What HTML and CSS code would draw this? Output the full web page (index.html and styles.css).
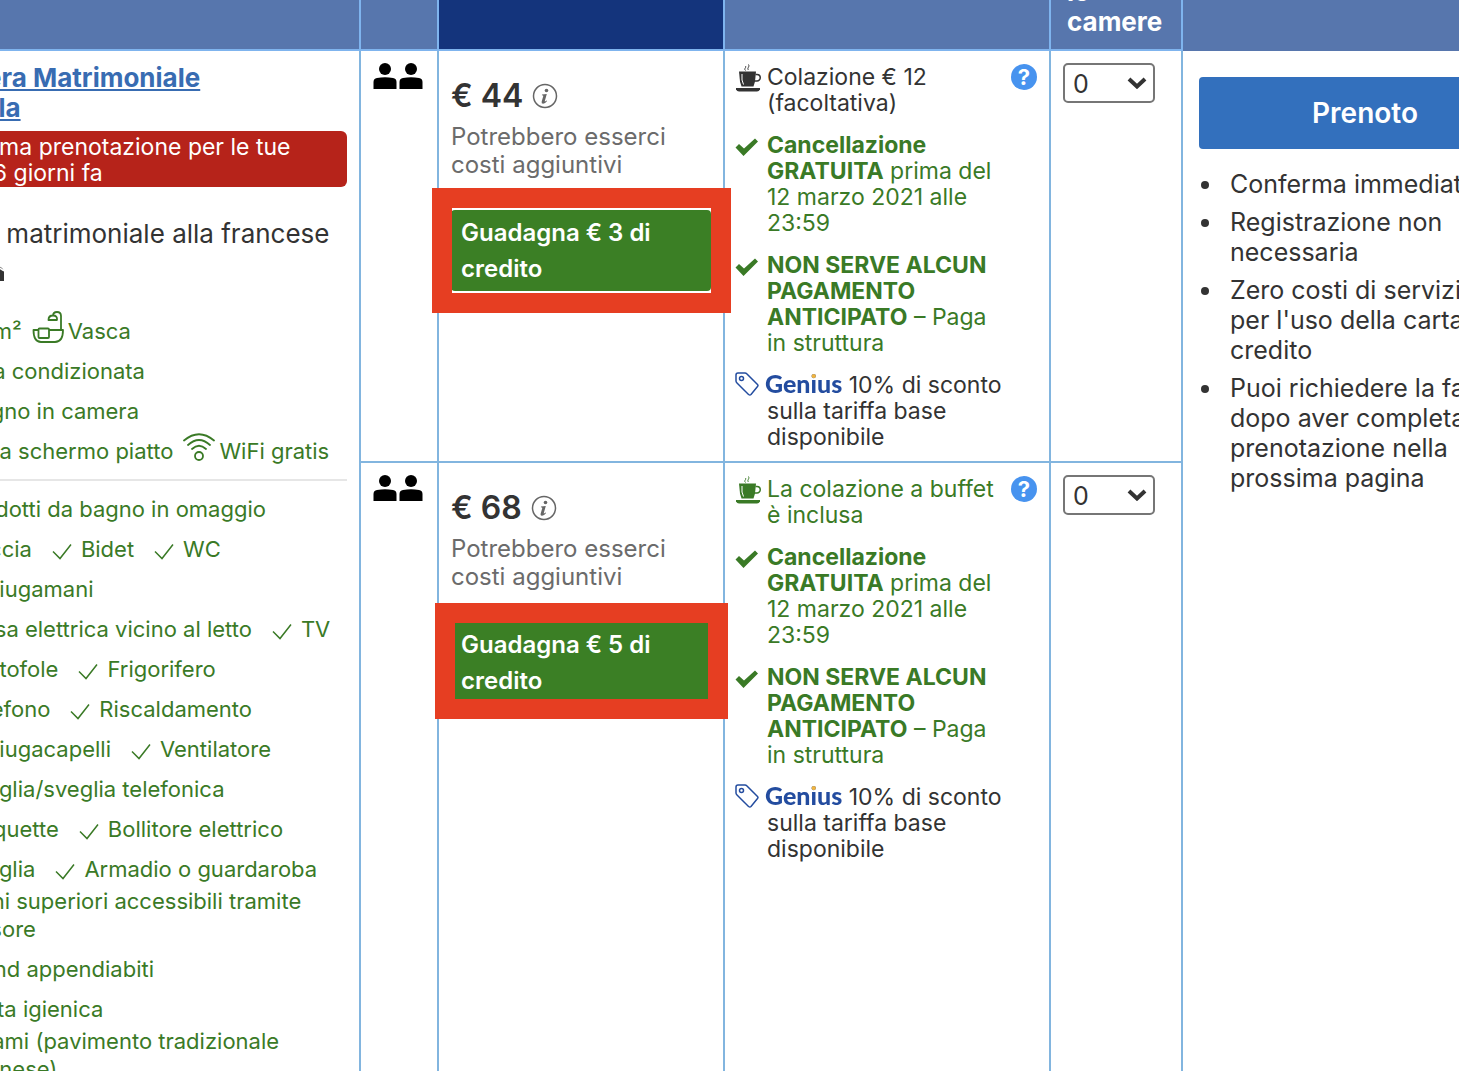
FILE: index.html
```html
<!DOCTYPE html>
<html lang="it">
<head>
  <meta charset="UTF-8" />
  <title>Camere disponibili</title>
  <link rel="stylesheet" href="styles.css">
</head>
<body>

  <!-- shared icons -->
  <svg class="sprite" aria-hidden="true">
    <symbol id="person" viewBox="0 0 24 26">
      <circle cx="12" cy="6" r="6" />
      <path d="M0.5 26v-7q0-3.5 3.5-4q8-1.300 16 0q3.500 .5 3.500 4v7z" />
    </symbol>
    <symbol id="tick" viewBox="0 0 20 17">
      <path d="M1 8.500 8 15.500 19 1.500" fill="none" stroke="currentColor" stroke-width="1.500" />
    </symbol>
    <symbol id="check" viewBox="0 0 24 20">
      <path d="M0.500 10.500 4 7 9 11.500 20 1.500 23 4.500 8.500 19z" />
    </symbol>
    <symbol id="cup" viewBox="0 0 26 28">
      <path d="M4 7.500h17l-1 10-1.500 5H6.500l-1.500-5z" />
      <path d="M20.500 10.500h1.500a3 3 0 0 1 0 6.500h-2.500" fill="none" stroke="currentColor" stroke-width="1.500" />
      <path d="M1 24h24v1.500q-1 2-3 2H4q-2 0-3-2z" />
      <path d="M10.500 6.500c-2-2 1-2.500 0-4.500M13.500 6c-2-2 1.500-3 0-5.500" fill="none" stroke="currentColor" />
      <path d="M7 10v6l1.500 4.500" fill="none" stroke="#fff" />
    </symbol>
    <symbol id="tag" viewBox="0 0 24 24">
      <path d="M3 1h7q1 0 2 1l10.500 10.500q1 1 0 2l-6.500 8q-1 1-2.500 0L2 11q-1-1-1-2V3q0-2 2-2z" fill="none" stroke="currentColor" stroke-width="1.500" />
      <circle cx="6.500" cy="6.500" r="2" fill="none" stroke="currentColor" stroke-width="1.500" />
    </symbol>
    <symbol id="info" viewBox="0 0 26 26">
      <circle cx="13" cy="13" r="11.500" fill="none" stroke="currentColor" stroke-width="1.500" />
      <circle cx="14.500" cy="7.500" r="1.800" />
      <path d="M10 11.500 14.800 11l-2 7q-.3 1.300 1.700-.5l.6.600q-2 2.600-4 2.600-2 0-1.400-2.200l1.600-5.400q.2-.8-1.400-.8z" />
    </symbol>
    <symbol id="chevron" viewBox="0 0 20 12">
      <path d="M2 2 10 9.500 18 2" fill="none" stroke="currentColor" stroke-width="4" />
    </symbol>
    <symbol id="bath" viewBox="0 0 32 32">
      <path d="M6.500 19h-5q0 12 7.500 12h14q8 0 8-12H17M29 19V5q0-4-4-4t-4 4M16.500 9q0-4.500 4.500-4.500T25 9zM7.500 17.500h8.500q1 0 1 1v7.500q0 1-1 1H7.500q-1 0-1-1v-7.500q0-1 1-1z" fill="none" stroke="currentColor" stroke-width="1.800" stroke-linejoin="round" />
    </symbol>
    <symbol id="wifi" viewBox="0 0 32 32">
      <g fill="none" stroke="currentColor" stroke-width="1.800" stroke-linecap="round">
        <path d="M1 9.500q15-12.500 30 0M5 14q11-10 22 0M9 18q7-6.500 14 0" />
        <circle cx="16" cy="25" r="4" />
      </g>
    </symbol>
    <symbol id="plain" viewBox="0 0 32 32">
      <path d="M4 4h24v24H4z" fill="none" stroke="currentColor" stroke-width="1.800" />
    </symbol>
  </svg>

  <div class="page">
    <table class="rooms">
      <colgroup>
        <col class="col-type">
        <col class="col-guests">
        <col class="col-price">
        <col class="col-options">
        <col class="col-select">
        <col>
      </colgroup>
      <thead>
        <tr>
          <th></th>
          <th></th>
          <th class="current"></th>
          <th></th>
          <th>Scegli<br>le<br>camere</th>
          <th class="last"></th>
        </tr>
      </thead>
      <tbody>
        <tr class="offer">
          <td class="type" rowspan="2">
            <a href="#" class="room-name">Camera Matrimoniale<br>Piccola</a>
            <p class="banner"><svg class="banner-icon"><use href="#info" /></svg>Ultima prenotazione per le tue date: 6 giorni fa</p>
            <p class="bed">1 letto matrimoniale alla francese
              <svg class="bed-icon" viewBox="0 0 76 26"><path d="M0 8h66V0h6v8h-6l8 5 2 3v10h-4v-4H4v4H0z" /><path d="M60 10.500h8l8 5.500" fill="none" stroke="#fff" stroke-width="1.500" /></svg>
            </p>

            <ul class="facilities">
              <li><svg><use href="#plain" /></svg>16 m²</li>
              <li><svg><use href="#bath" /></svg>Vasca</li>
              <li class="wide"><svg><use href="#plain" /></svg>Aria condizionata</li>
              <li class="wide"><svg><use href="#plain" /></svg>Bagno in camera</li>
              <li><svg><use href="#plain" /></svg>TV a schermo piatto</li>
              <li><svg><use href="#wifi" /></svg>WiFi gratis</li>
            </ul>

            <ul class="amenities">
              <li><svg><use href="#tick" /></svg>Prodotti da bagno in omaggio</li>
              <li><svg><use href="#tick" /></svg>Doccia</li>
              <li><svg><use href="#tick" /></svg>Bidet</li>
              <li><svg><use href="#tick" /></svg>WC</li>
              <li><svg><use href="#tick" /></svg>Asciugamani</li>
              <li><svg><use href="#tick" /></svg>Presa elettrica vicino al letto</li>
              <li><svg><use href="#tick" /></svg>TV</li>
              <li><svg><use href="#tick" /></svg>Pantofole</li>
              <li><svg><use href="#tick" /></svg>Frigorifero</li>
              <li><svg><use href="#tick" /></svg>Telefono</li>
              <li><svg><use href="#tick" /></svg>Riscaldamento</li>
              <li><svg><use href="#tick" /></svg>Asciugacapelli</li>
              <li><svg><use href="#tick" /></svg>Ventilatore</li>
              <li><svg><use href="#tick" /></svg>Sveglia/sveglia telefonica</li>
              <li><svg><use href="#tick" /></svg>Moquette</li>
              <li><svg><use href="#tick" /></svg>Bollitore elettrico</li>
              <li><svg><use href="#tick" /></svg>Sveglia</li>
              <li><svg><use href="#tick" /></svg>Armadio o guardaroba</li>
              <li class="long"><svg><use href="#tick" /></svg>Piani superiori accessibili tramite ascensore</li>
              <li class="wide"><svg><use href="#tick" /></svg>Stand appendiabiti</li>
              <li class="wide"><svg><use href="#tick" /></svg>Carta igienica</li>
              <li class="long"><svg><use href="#tick" /></svg>Tatami (pavimento tradizionale giapponese)</li>
            </ul>
          </td>
          <td class="guests">
            <svg><use href="#person" /></svg><svg><use href="#person" /></svg>
          </td>
          <td class="price">
            <div class="amount">€ 44 <svg><use href="#info" /></svg></div>
            <p class="extra">Potrebbero esserci costi aggiuntivi</p>
            <div class="credit marked">Guadagna € 3 di credito</div>
          </td>
          <td class="options">
            <button class="help" type="button" aria-label="Aiuto">?</button>
            <ul>
              <li><svg><use href="#cup" /></svg>Colazione € 12 (facoltativa)</li>
              <li class="good"><svg class="check"><use href="#check" /></svg><b>Cancellazione GRATUITA</b> prima del 12 marzo 2021 alle 23:59</li>
              <li class="good"><svg class="check"><use href="#check" /></svg><b>NON SERVE ALCUN PAGAMENTO ANTICIPATO</b> – Paga in struttura</li>
              <li><svg class="tag"><use href="#tag" /></svg><span class="genius">Genius</span> 10% di sconto sulla tariffa base disponibile</li>
            </ul>
          </td>
          <td class="quantity">
            <div class="select">
              <select aria-label="Numero di camere a € 44"><option>0</option><option>1</option><option>2</option></select>
              <svg><use href="#chevron" /></svg>
            </div>
          </td>
          <td class="booking" rowspan="2">
            <button class="book" type="button">Prenoto</button>
            <ul>
              <li>Conferma immediata</li>
              <li>Registrazione non necessaria</li>
              <li>Zero costi di servizio<br>per l'uso della carta di credito</li>
              <li>Puoi richiedere la fattura<br>dopo aver completato la<br>prenotazione nella<br>prossima pagina</li>
            </ul>
          </td>
        </tr>
        <tr class="offer-last">
          <td class="guests">
            <svg><use href="#person" /></svg><svg><use href="#person" /></svg>
          </td>
          <td class="price">
            <div class="amount">€ 68 <svg><use href="#info" /></svg></div>
            <p class="extra">Potrebbero esserci costi aggiuntivi</p>
            <div class="credit marked tight">Guadagna € 5 di credito</div>
          </td>
          <td class="options">
            <button class="help" type="button" aria-label="Aiuto">?</button>
            <ul>
              <li class="good"><svg><use href="#cup" /></svg>La colazione a buffet è inclusa</li>
              <li class="good"><svg class="check"><use href="#check" /></svg><b>Cancellazione GRATUITA</b> prima del 12 marzo 2021 alle 23:59</li>
              <li class="good"><svg class="check"><use href="#check" /></svg><b>NON SERVE ALCUN PAGAMENTO ANTICIPATO</b> – Paga in struttura</li>
              <li><svg class="tag"><use href="#tag" /></svg><span class="genius">Genius</span> 10% di sconto sulla tariffa base disponibile</li>
            </ul>
          </td>
          <td class="quantity">
            <div class="select">
              <select aria-label="Numero di camere a € 68"><option>0</option><option>1</option><option>2</option></select>
              <svg><use href="#chevron" /></svg>
            </div>
          </td>
        </tr>
      </tbody>
    </table>
  </div>

</body>
</html>
```

FILE: styles.css
```css
body {
  margin: 0;
  font-family: Inter, "Liberation Sans", sans-serif;
  font-size: 23px;
  line-height: 26px;
  color: #333;
  background: #fff;
}

ul, p {
  margin: 0;
  padding: 0;
  list-style: none;
}

svg {
  fill: currentColor;
}

.sprite {
  display: none;
}

.page {
  height: 100vh;
  overflow: hidden;
}

/* the table is wider than the window and scrolled a little both ways */
.rooms {
  width: calc(100% + 172px);
  margin: -66px 0 0 -84px;
  table-layout: fixed;
  border-collapse: separate;
  border-spacing: 0;
}

.col-type { width: 445px; }
.col-guests { width: 78px; }
.col-price { width: 286px; }
.col-options { width: 326px; }
.col-select { width: 132px; }

th {
  box-sizing: border-box;
  padding: 13px 0 12px 16px;
  font-size: 26px;
  line-height: 30px;
  text-align: left;
  color: #fff;
  background: #5776ad;
  border-right: 2px solid #7fb4ee;
  border-bottom: 2px solid #7fb4ee;
}

th.current {
  background: #14347c;
}

th.last {
  border-right: 0;
  border-bottom-color: #5776ad;
}

td {
  box-sizing: border-box;
  padding: 12px;
  vertical-align: top;
  border-right: 2px solid #82b5df;
  border-bottom: 2px solid #82b5df;
}

.offer {
  height: 412px;
}

.offer-last {
  height: 760px;
}

/* room type */
.room-name {
  font-size: 26px;
  line-height: 30px;
  font-weight: bold;
  color: #386cb2;
}

.banner {
  margin-top: 8px;
  padding: 3px 4px 1px;
  color: #fff;
  background: #b6231a;
  border-radius: 6px;
}

.banner-icon {
  width: 22px;
  height: 18px;
  margin-right: 9px;
}

.bed {
  margin-top: 32px;
  font-size: 26px;
  line-height: 30px;
}

.bed-icon {
  display: block;
  width: 76px;
  height: 26px;
  margin-top: 6px;
}

.facilities, .amenities {
  display: flex;
  flex-wrap: wrap;
  font-size: 22px;
  color: #3a7a26;
}

.facilities {
  margin-top: 30px;
  padding-bottom: 8px;
  column-gap: 10px;
  line-height: 40px;
  border-bottom: 2px solid #e6e6e6;
}

.facilities li {
  display: flex;
  align-items: flex-start;
}

.facilities svg {
  width: 32px;
  height: 32px;
  margin-right: 4px;
}

.wide {
  width: 100%;
}

.amenities {
  margin-top: 14px;
  gap: 12px 17px;
  line-height: 28px;
}

.amenities svg {
  width: 20px;
  height: 17px;
  margin: 0 9px 0 3px;
  vertical-align: -3px;
}

.amenities .long {
  margin-top: -8px;
}

/* guests */
.guests {
  color: #000;
  font-size: 0;
}

.guests svg {
  width: 24px;
  height: 26px;
  margin-right: 2px;
}

.guests svg:last-child {
  margin-right: 0;
}

/* price */
.amount {
  display: flex;
  align-items: center;
  gap: 9px;
  margin-top: 14px;
  font-size: 32px;
  line-height: 38px;
  font-weight: 600;
}

.amount svg {
  width: 26px;
  height: 26px;
  color: #666;
}

.extra {
  margin-top: 8px;
  font-size: 24px;
  line-height: 28px;
  color: #6b6b6b;
}

.credit {
  position: relative;
  margin-top: 31px;
  padding: 5px 10px 4px;
  font-size: 24px;
  line-height: 36px;
  font-weight: 600;
  color: #fff;
  background: #3b7f25;
  border-radius: 4px;
}

.marked::after {
  content: "";
  position: absolute;
  inset: -22px -20px -22px -19px;
  border: 20px solid #e63e22;
}

.tight::after {
  inset: -19px -17px -16px -16px;
}

/* conditions */
.options {
  padding: 13px 12px 11px 10px;
}

.options ul {
  display: flex;
  flex-direction: column;
  gap: 16px;
  margin-right: 30px;
  padding-left: 32px;
}

.options li svg {
  float: left;
  width: 26px;
  height: 28px;
  margin-left: -32px;
}

.options li .check {
  width: 24px;
  height: 20px;
  margin-top: 5px;
}

.options li .tag {
  width: 24px;
  height: 24px;
  color: #234c9f;
}

.good {
  color: #3a7a26;
}

.help {
  float: right;
  width: 26px;
  height: 26px;
  margin-left: 4px;
  padding: 0;
  font: bold 22px/26px Inter, sans-serif;
  color: #fff;
  background: #4793ef;
  border: 0;
  border-radius: 50%;
}

/* blue wordmark, only the dot of the i is yellow */
.genius {
  margin-left: -2px;
  font-family: Lato, sans-serif;
  font-size: 25px;
  font-weight: 900;
  line-height: 20px;
  color: transparent;
  background:
    linear-gradient(#f0b440, #f0b440) 46px 0 / 8px 10px no-repeat,
    #234c9f;
  -webkit-background-clip: text;
  background-clip: text;
}

/* rooms drop-down */
.select {
  position: relative;
  width: 92px;
}

.select select {
  display: block;
  width: 100%;
  height: 40px;
  padding: 1px 8px 0;
  appearance: none;
  font: 25px Inter, sans-serif;
  color: #333;
  background: #fff;
  border: 2px solid #767676;
  border-radius: 5px;
}

.select svg {
  position: absolute;
  top: 14px;
  right: 8px;
  width: 20px;
  height: 12px;
  pointer-events: none;
}

/* booking */
.booking {
  padding: 26px 16px;
  border: 0;
}

.book {
  width: 100%;
  height: 72px;
  font: 600 28px Inter, sans-serif;
  color: #fff;
  background: #3370bd;
  border: 0;
  border-radius: 4px;
}

.booking ul {
  margin-top: 20px;
  padding-left: 31px;
  font-size: 25px;
  line-height: 30px;
}

.booking li {
  position: relative;
  margin-bottom: 8px;
}

.booking li::before {
  content: "";
  position: absolute;
  top: 12px;
  left: -29px;
  width: 8px;
  height: 8px;
  background: #333;
  border-radius: 50%;
}
```
